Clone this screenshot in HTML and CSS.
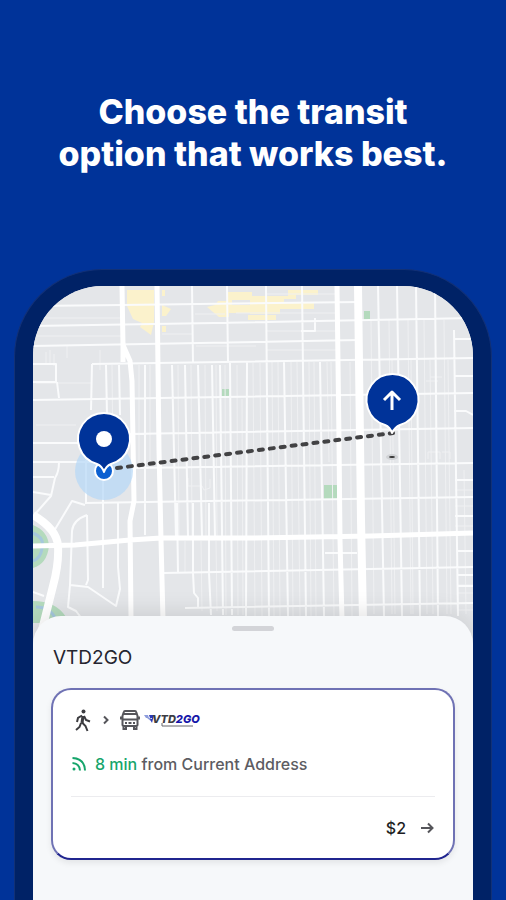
FILE: index.html
```html
<!DOCTYPE html>
<html lang="en">
<head>
    <meta charset="UTF-8">
    <meta name="viewport" content="width=device-width, initial-scale=1.0">
    <title>VTD2GO</title>
    <link rel="stylesheet" href="styles.css">
</head>
<body>
<h1 class="headline">Choose the transit<br>option that works best.</h1>

<div class="phone">
    <div class="screen">
        <!-- map -->
        <svg class="map" viewBox="33 286 440 356" role="img" aria-label="Route map">
            <rect class="land" x="33" y="286" width="440" height="356"/>

            <!-- commercial areas -->
            <path class="shop" d="M127 290h27v32l-3 13-4-3-7-5 2-4-9-4-6-13zM162 290h3v6h-3zM162 305l9 4-5 7h-4zM162 326h4v6h-4zM207 307l8-2 3-4h10v-9h24v8h-20v5h24v8h-27v4h-10zM250 296h38v-6h30v5h-22v4h-12v4h30v6h-34v5h-30zM248 315h28v5h-28z"/>
            <!-- parks -->
            <path class="park" d="M222 389h7v7h-7zM364 311h6v9h-6zM324 485h13v14h-13zM33 525q15 6 16 21-2 18-16 22zM33 601q23 0 33 16v6H33z"/>
            <path class="water" d="M33 533q12 5 9 15-1 10-9 13M36 607q15 0 20 13"/>

            <!-- alleys -->
            <path class="alley" d="M112 365l1 100M139 365v100M150 365v100M178 365l1 172M191 365l1 172M205 365l1 172M216 365l1 172M225 365l1 250M237 365l1 250M242 399l1 216M253 363l2 253M260 363l2 253M272 362l2 254M278 362l2 254M291 362l2 254M297 362l3 254M309 362l2 254M314 362l2 254M327 362l2 100M331 362l3 254M350 362l2 254M371 320l3 294M389 320l3 294M392 360l3 254M408 320l3 294M411 360l2 254M424 320l3 294M430 360l3 254M444 320l3 294M448 360l3 254M464 470l2 144M185 541v32M201 541l1 70M216 541l1 70M100 350v20M67 346v12M46 352v12M50 350v14M54 354v12M36 318h86M36 383h56M36 425h40M36 336h86M162 334h30M196 346h60M266 331h70M266 350h70M195 314h30M236 313h100M266 294h70M430 377h12M426 381h12M455 490h18M455 506h18M455 526h18M457 585h16M457 593h16M457 610h16M188 478v8h14l2 4 6-2v-9M428 459v-7h12v7M442 452h8v7"/>

            <!-- streets -->
            <path class="street" d="M33 306l89-1 236-3M33 326l181-3 259-5M33 346l325-6M92 364l381-6M33 400l440-7M130 434l343-6M134 468l339-5M85 503l388-6M164 573l309-6M185 608l288-5M33 443h45M33 462h65M33 364h23v18H33M57 382l2 16M92 364l-1 46M192 286l1 77M227 286l1 76M106 365l1 50M119 365l1 50M145 365v170M172 365l4 173M177 503l1 70M185 365l3 172M193 503v70l1 20 4 5v10M198 365l4 172M212 365l3 172M209 503v70l2 42M220 365l3 250M230 362l2 253M247 362l-1 254M266 286l3 330M284 362l4 254M302 286l4 330M320 362l4 254M378 286l6 330M397 286l5 330M416 286l4 330M435 286l3 330M454 330l4 286M454 339h19M454 376h19M454 411h12l7 4M455 480h18M455 516h18M457 551h16M457 575h16M457 586h16M325 553h32M315 318v13h-14"/>
            <path class="street" d="M86 460v43M87 515l1 65-2 5M87 515q-14 5-15 16l-2 54M103 475v113M118 502v65l2 22-4 17-28-19-18-2M54 531l18-30 13 4M70 585l-2 22 8 4 6 8M59 462q0 10-4 16l-4 18-15 17M33 477h21M33 492l18 3M33 592l11 4"/>

            <!-- avenues -->
            <path class="avenue" d="M122 286l1 59 7 16 2 20 2 120-4 20 1 97M123 342v20M157 286l2 164 2 90 2 80M337 286l2 154 1 100 2 80M33 546l42-1 55-5 31-2h90l120-2 102-3"/>
            <path class="highway" d="M358 286l2 154 1 80 2 100M33 515q24 14 25 31 1 18-5 40l-14 56"/>

            <!-- current location -->
            <circle class="halo" cx="104" cy="471" r="29"/>
            <circle class="here" cx="104" cy="471" r="9"/>
            <path class="route" d="M117 468L393 433"/>
            <ellipse class="spot" cx="392" cy="457" rx="6" ry="3"/>
            <ellipse class="spot-core" cx="392" cy="457" rx="3" ry="1"/>

            <!-- pins -->
            <path class="pin" d="M104 472q-2-6-7-8A26 26 0 1 1 111 464q-5 2-7 8z"/>
            <circle class="pin-dot" cx="104" cy="439" r="8"/>
            <path class="pin" d="M392 433q-2-6-7-8A26 26 0 1 1 400 425q-5 2-8 8z"/>
            <path class="pin-arrow" d="M392 410v-18M384 400l8-8 8 8"/>
        </svg>

        <!-- bottom sheet -->
        <section class="sheet">
            <div class="handle"></div>
            <h2 class="title">VTD2GO</h2>
            <a class="trip" href="#">
                <span class="modes">
                    <svg class="walk" viewBox="0 0 18 24" width="18" height="24" aria-hidden="true">
                        <circle cx="9.500" cy="3.500" r="2"/>
                        <path d="M8 7.500L4 10l-1 4M10 8l2 4 4 1.500M8 14.500l3.500 3.500 2 5M7 15l-1.500 4-3.500 3"/>
                        <path class="torso" d="M9 8l-1 7"/>
                    </svg>
                    <svg class="chevron" viewBox="0 0 8 10" width="8" height="10" aria-hidden="true"><path d="M2 1.500L5.500 5 2 8.500"/></svg>
                    <svg class="bus" viewBox="0 0 20 20" width="20" height="20" aria-hidden="true">
                        <path d="M5 1h10q1 0 1.200 1L17.500 6v9q0 1-1 1h-13q-1 0-1-1V6L3.800 2Q4 1 5 1zM4 4h12M2.500 9.500h15M1 6.500v3M19 6.500v3M5 13h2M13 13h2M8.500 13h3M3.500 16v3H6v-3M14 16v3h2.500v-3"/>
                    </svg>
                    <svg class="brand" viewBox="0 0 58 18" width="58" height="18" role="img" aria-label="VTD2GO">
                        <path class="brand-flag light" d="M0 4h4l1 3H2zM3 7h4l1 4z"/>
                        <path class="brand-flag" d="M5 4h2l1 3H6zM7 4h3L8 12 6 8h2z"/>
                        <text x="8" y="12"><tspan>VTD</tspan><tspan class="go">2GO</tspan></text>
                        <path class="brand-line" d="M18 12v3h31"/>
                    </svg>
                </span>
                <span class="eta">
                    <svg class="live" viewBox="0 0 16 16" width="16" height="16" aria-hidden="true">
                        <path d="M1.500 2q12 .5 12.500 12.500M1.500 7q7 .5 7.500 7.500"/>
                        <circle cx="3" cy="13" r="1.500"/>
                    </svg>
                    <span><span class="minutes">8 min</span> from Current Address</span>
                </span>
                <span class="fare">
                    <span class="price">$2</span>
                    <svg class="go-arrow" viewBox="0 0 14 12" width="14" height="12" aria-hidden="true"><path d="M1 6h11.500M8 1.500L12.500 6 8 10.500"/></svg>
                </span>
            </a>
        </section>
    </div>
</div>
</body>
</html>
```
FILE: styles.css
```css
* {
    margin: 0;
    padding: 0;
    box-sizing: border-box;
}

body {
    display: flex;
    flex-direction: column;
    min-height: 100vh;
    background: #003399;
    color: #25252f;
    font-family: Inter, "Liberation Sans", sans-serif;
}

.headline {
    padding: 91px 16px 94px;
    color: #fff;
    font-size: 34px;
    font-weight: 800;
    line-height: 42px;
    text-align: center;
}

/* phone frame */
.phone {
    display: flex;
    flex: 1;
    margin: 0 14px;
    padding: 16px 18px 0;
    background: #002266;
    border: 1px solid #123176;
    border-bottom: 0;
    border-radius: 88px 88px 0 0;
}

.screen {
    display: flex;
    flex: 1;
    flex-direction: column;
    overflow: hidden;
    background: #e5e6e9;
    border-radius: 70px 70px 0 0;
}

/* map */
.map {
    display: block;
    width: 100%;
    height: auto;
}

.map path {
    fill: none;
    stroke-linejoin: round;
}

.land { fill: #e4e6e9; }
.map .shop { fill: #fbf2cc; }
.map .park { fill: #b4dabd; }
.map .water { stroke: #a5c8dc; stroke-width: 3; }
.alley { stroke: #eff0f2; stroke-width: 1; }
.street { stroke: #fafbfc; stroke-width: 2; }
.avenue { stroke: #fff; stroke-width: 5; }
.highway { stroke: #fff; stroke-width: 8; }

.halo { fill: #b5d7f6; fill-opacity: 0.7; }
.here { fill: #0b60d1; stroke: #fff; stroke-width: 2; }

.route {
    stroke: #424244;
    stroke-width: 4;
    stroke-linecap: round;
    stroke-dasharray: 4 7;
}

.spot { fill: #d0d2d5; }
.spot-core { fill: #333; }

.map .pin { fill: #003399; stroke: #fff; stroke-width: 2; }
.pin-dot { fill: #fff; }
.pin-arrow { stroke: #fff; stroke-width: 3; }

/* bottom sheet */
.sheet {
    position: relative;
    flex: 1;
    margin-top: -26px;
    padding: 10px 18px 40px;
    background: #f6f8fa;
    border-radius: 28px 28px 0 0;
    box-shadow: 0 -2px 24px rgba(0, 0, 0, 0.12);
}

.handle {
    width: 42px;
    height: 5px;
    margin: 0 auto;
    background: #d3d4d8;
    border-radius: 3px;
}

.title {
    margin: 15px 0 18px 2px;
    font-size: 19px;
    font-weight: 400;
    line-height: 24px;
}

.trip {
    display: block;
    padding: 18px;
    background: #fff;
    border: 2px solid #6f72b4;
    border-bottom-color: #20258f;
    border-radius: 20px;
    box-shadow: 0 3px 6px rgba(0, 0, 0, 0.08);
    color: #5c5c62;
    text-decoration: none;
}

.modes, .eta, .fare {
    display: flex;
    align-items: center;
    height: 24px;
}

.modes svg {
    fill: none;
    stroke: #3c3c40;
}

.modes .walk { margin-left: 3px; stroke-width: 2; }
.walk circle { fill: #3c3c40; stroke: none; }
.walk .torso { stroke-width: 3; }
.modes .chevron { margin: 0 10px; stroke: #55555a; stroke-width: 2; }
.modes .bus { stroke: #55555a; stroke-width: 2; }

.modes .brand { margin-left: 4px; stroke: none; }
.brand text {
    fill: #3c3c44;
    font-size: 11px;
    font-style: italic;
    font-weight: 800;
}
.brand .go { fill: #1515a8; }
.brand-flag { fill: #2a39b8; }
.map path.light, .brand .light { fill: #8d9cdc; }
.modes .brand-line { stroke: #66666c; stroke-width: 1; }

.eta {
    gap: 8px;
    margin: 20px 0;
    font-size: 16px;
    font-weight: 500;
}

.minutes { color: #16a56b; }
.live { fill: none; stroke: #16a56b; stroke-width: 2; }
.live circle { fill: #16a56b; stroke: none; }

.fare {
    justify-content: flex-end;
    gap: 14px;
    height: 44px;
    padding: 19px 1px 0 0;
    border-top: 1px solid #ececef;
}

.price {
    color: #1d1d22;
    font-size: 16px;
    font-weight: 500;
}

.go-arrow { fill: none; stroke: #55555a; stroke-width: 2; }
```
